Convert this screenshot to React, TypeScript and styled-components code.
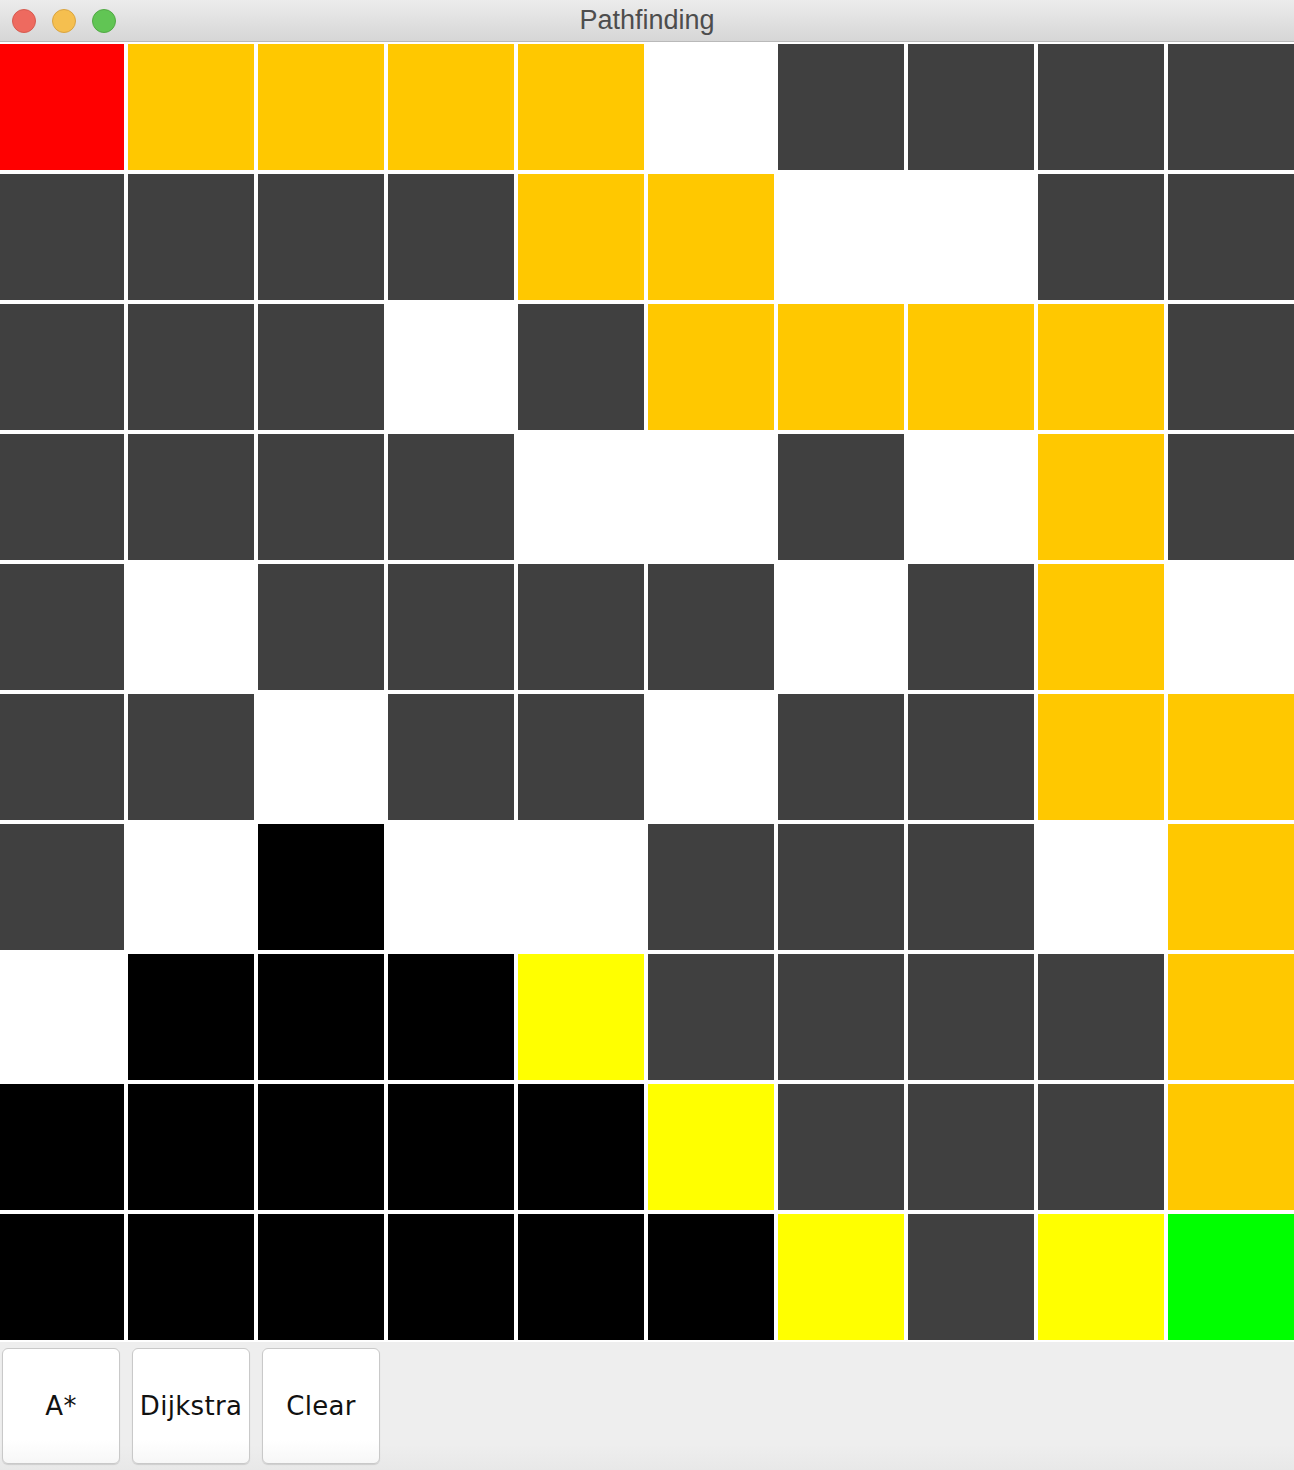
import styled, { createGlobalStyle } from "styled-components"

const GlobalStyle = createGlobalStyle`
    html, body {
        margin: 0;
        padding: 0;
        background: #eeeeee;
    }
`

type Cor = "R" | "O" | "W" | "D" | "B" | "Y" | "G"

const CORES: Record<Cor, string> = {
    R: "#ff0000",
    O: "#ffc800",
    W: "#ffffff",
    D: "#404040",
    B: "#000000",
    Y: "#ffff00",
    G: "#00ff00",
}

const GRADE: string[] = [
    "ROOOOWDDDD",
    "DDDDOOWWDD",
    "DDDWDOOOOD",
    "DDDDWWDWOD",
    "DWDDDDWDOW",
    "DDWDDWDDOO",
    "DWBWWDDDWO",
    "WBBBYDDDDO",
    "BBBBBYDDDO",
    "BBBBBBYDYG",
]

const Janela = styled.div`
    width: 1294px;
    height: 1470px;
    overflow: hidden;
    background: #eeeeee;
`

const BarraTitulo = styled.div`
    height: 41px;
    display: flex;
    align-items: center;
    position: relative;
    background: linear-gradient(180deg, #ececec 0%, #d6d6d6 100%);
    border-bottom: 1px solid #b9b9b9;
`

const Semaforos = styled.div`
    display: flex;
    gap: 16px;
    padding-left: 12px;
`

const Botaozinho = styled.span<{ $cor: string; $borda: string }>`
    width: 22px;
    height: 22px;
    border-radius: 50%;
    background: ${(p) => p.$cor};
    border: 1px solid ${(p) => p.$borda};
`

const Titulo = styled.h1`
    position: absolute;
    inset: 0;
    margin: 0;
    display: flex;
    align-items: center;
    justify-content: center;
    font-family: "Liberation Sans", Arial, sans-serif;
    font-weight: normal;
    font-size: 27px;
    color: #4d4d4d;
    pointer-events: none;
`

const AreaTabuleiro = styled.div`
    width: 1294px;
    overflow: hidden;
`

const Tabuleiro = styled.div`
    width: 1300px;
    margin-left: -4px;
    display: grid;
    grid-template-columns: repeat(10, 130px);
    grid-auto-rows: 130px;
`

const Celula = styled.div<{ $cor: string }>`
    box-sizing: border-box;
    border: 2px solid #ffffff;
    background: ${(p) => p.$cor};
`

const BarraBotoes = styled.div`
    height: 128px;
    box-sizing: border-box;
    display: flex;
    gap: 12px;
    padding: 6px 0 0 2px;
    background: linear-gradient(180deg, #eeeeee 80%, #e8e8e8 100%);
`

const Botao = styled.button`
    width: 118px;
    height: 116px;
    box-sizing: border-box;
    border: 1px solid #c9c9c9;
    border-radius: 6px;
    background: linear-gradient(180deg, #ffffff 80%, #f7f7f7 100%);
    box-shadow: 0 1px 1px rgba(0, 0, 0, 0.12);
    font-family: "DejaVu Sans", Verdana, sans-serif;
    font-size: 26px;
    letter-spacing: 0.3px;
    color: #111111;
    padding: 0;
    cursor: pointer;
`

export default function App() {
    return (
        <>
            <GlobalStyle />
            <Janela>
                <BarraTitulo>
                    <Semaforos>
                        <Botaozinho $cor="#ee6a5f" $borda="#d65b50" />
                        <Botaozinho $cor="#f5bf4f" $borda="#d9a441" />
                        <Botaozinho $cor="#61c554" $borda="#52a945" />
                    </Semaforos>
                    <Titulo>Pathfinding</Titulo>
                </BarraTitulo>
                <AreaTabuleiro>
                    <Tabuleiro>
                        {GRADE.map((linha, i) =>
                            linha.split("").map((c, j) => (
                                <Celula key={`${i}-${j}`} $cor={CORES[c as Cor]} />
                            ))
                        )}
                    </Tabuleiro>
                </AreaTabuleiro>
                <BarraBotoes>
                    <Botao>A*</Botao>
                    <Botao>Dijkstra</Botao>
                    <Botao>Clear</Botao>
                </BarraBotoes>
            </Janela>
        </>
    )
}
